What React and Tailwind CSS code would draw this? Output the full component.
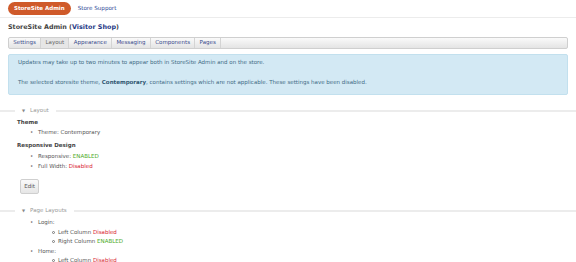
import React from "react";

function Legend({ label }) {
  return (
    <div className="flex items-center h-[10px]">
      <div className="w-[15px] h-[2px] bg-[#ececec]" />
      <div className="flex items-center px-[7px] text-[#999] gap-[5px]">
        <span className="text-[4px] text-[#888]">▼</span>
        <span>{label}</span>
      </div>
      <div className="flex-1 h-[2px] bg-[#ececec]" />
    </div>
  );
}

function Bullet({ children }) {
  return (
    <div className="flex items-center h-[9.5px]">
      <span className="w-[8px] text-[#666]">•</span>
      <span>{children}</span>
    </div>
  );
}

function Circle({ children }) {
  return (
    <div className="flex items-center h-[9.5px]">
      <span className="w-[6px] flex items-center">
        <span className="w-[3px] h-[3px] rounded-full border-[0.8px] border-[#777]" />
      </span>
      <span>{children}</span>
    </div>
  );
}

const En = () => <span className="text-[#4caa1e]">ENABLED</span>;
const Dis = () => <span className="text-[#d8222e]">Disabled</span>;

export default function App() {
  const tabs = ["Settings", "Layout", "Appearance", "Messaging", "Components", "Pages"];
  return (
    <div className="w-[576px] h-[262px] overflow-hidden bg-white font-['DejaVu_Sans',sans-serif] text-[5.5px] text-[#555] leading-none">
      <div className="flex items-center gap-[7px] px-[8px] h-[18px] border-b border-[#ececec]">
        <span className="bg-[#cf5a2a] text-white font-bold rounded-full px-[6px] h-[13px] flex items-center text-[5.5px]">
          StoreSite Admin
        </span>
        <span className="text-[#2e4a96] text-[5.6px]">Store Support</span>
      </div>
      <div className="px-[8px]">
        <div className="h-[19px] flex items-center font-bold text-[6.4px] text-[#444]">
          StoreSite Admin (<span className="text-[#1f3a86]">Visitor Shop</span>)
        </div>
        <div className="flex h-[12px] border border-[#cfcfcf] rounded-[2px] bg-gradient-to-b from-[#fafafa] to-[#e4e4e4] overflow-hidden">
          {tabs.map((t) => (
            <div
              key={t}
              className={
                "flex items-center px-[4.3px] border-r border-[#d4d4d4] " +
                (t === "Layout" ? "bg-[#e6e6e6] text-[#666]" : "text-[#3a4c8c]")
              }
            >
              {t}
            </div>
          ))}
        </div>
        <div className="mt-[5px] h-[41px] bg-[#d3e9f4] border border-[#c2e0ee] rounded-[2px] px-[9px] pt-[5px] text-[#3f6b85] flex flex-col gap-[14px]">
          <div className="h-[6px] flex items-center">Updates may take up to two minutes to appear both in StoreSite Admin and on the store.</div>
          <div className="h-[6px] flex items-center">
            The selected storesite theme,&nbsp;<b className="text-[#2f5570]">Contemporary</b>, contains settings which are not applicable. These settings have been disabled.
          </div>
        </div>
      </div>
      <div className="mt-[11px]">
        <Legend label="Layout" />
      </div>
      <div className="pl-[17px] pt-[2px]">
        <div className="h-[10px] flex items-center font-bold text-[#444]">Theme</div>
        <div className="pl-[13px]">
          <Bullet>Theme: Contemporary</Bullet>
        </div>
        <div className="mt-[3.5px] h-[10px] flex items-center font-bold text-[#444]">Responsive Design</div>
        <div className="pl-[13px] pt-[1px]">
          <Bullet>Responsive: <En /></Bullet>
          <Bullet>Full Width: <Dis /></Bullet>
        </div>
        <div className="pt-[8px] pl-[3px]">
          <div className="w-[19px] h-[15px] border border-[#cfcfcf] rounded-[2px] bg-gradient-to-b from-[#fafafa] to-[#e6e6e6] flex items-center justify-center text-[#555]">
            Edit
          </div>
        </div>
      </div>
      <div className="mt-[12px]">
        <Legend label="Page Layouts" />
      </div>
      <div className="pl-[30px] pt-[2px]">
        <Bullet>Login:</Bullet>
        <div className="pl-[22px]">
          <Circle>Left Column <Dis /></Circle>
          <Circle>Right Column <En /></Circle>
        </div>
        <Bullet>Home:</Bullet>
        <div className="pl-[22px]">
          <Circle>Left Column <Dis /></Circle>
        </div>
      </div>
    </div>
  );
}
